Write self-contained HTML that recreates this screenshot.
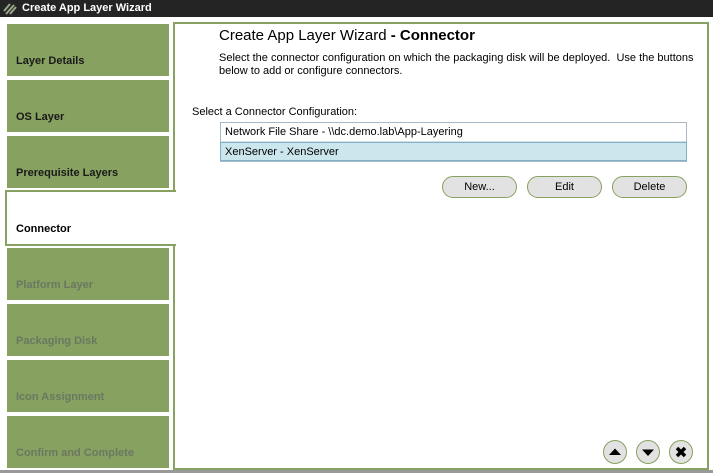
<!DOCTYPE html>
<html><head><style>
*{margin:0;padding:0;box-sizing:border-box}
body{width:713px;height:473px;background:#fff;font-family:"Liberation Sans",Arial,sans-serif;position:relative;overflow:hidden}
.bar{position:absolute;left:0;top:0;width:713px;height:17px;background:#242424;color:#fff;font-size:11px;font-weight:bold;line-height:17px}
.bar span{position:absolute;left:22px;top:0}
.tab{position:absolute;left:7px;width:162px;height:52px;background:#87a160;font-size:11px;font-weight:bold;color:#1a1a1a;padding:31px 0 0 9px}
.tab.dis{color:#6b7760}
.conn{position:absolute;left:5px;top:190px;width:171px;height:56px;background:#fff;border:2px solid #87a160;border-right:none;font-size:11px;font-weight:bold;padding:31px 0 0 9px;z-index:2}
.panel{position:absolute;left:173px;top:22px;width:536px;height:448px;border:2px solid #87a160}
.gray{position:absolute;left:0;top:470px;width:713px;height:3px;background:#999}
.t{position:absolute;left:219px;top:27px;font-size:15px}
.d{position:absolute;left:219px;top:52px;font-size:11px;line-height:13px;width:480px}
.l{position:absolute;left:192px;top:106px;font-size:11px}
.list{position:absolute;left:220px;top:122px;width:467px;height:40px;border:1px solid #a8b8c4;font-size:11px}
.r1{height:19px;line-height:18px;padding-left:4px;border-bottom:1px solid #d8e0e4}
.r2{height:19px;line-height:19px;padding-left:4px;background:#cce6ee;border:1px solid #7fb2c8;margin:0 -1px}
.btn{position:absolute;top:176px;width:75px;height:22px;border:1px solid #87a160;border-radius:11px;background:#e2e2e2;font-size:11px;text-align:center;line-height:20px}
.c{position:absolute;top:440px;width:24px;height:24px;border:1px solid #87a160;border-radius:50%;background:#e2e2e2}
</style></head><body>
<div class="bar"><svg width="14" height="14" style="position:absolute;left:3px;top:2px" viewBox="0 0 14 14"><path d="M1 9L7 2M3 12L11 3M7 12L13 5" stroke="#9aa88a" stroke-width="2"/></svg><span>Create App Layer Wizard</span></div>
<div class="panel"></div>
<div class="tab" style="top:24px">Layer Details</div>
<div class="tab" style="top:80px">OS Layer</div>
<div class="tab" style="top:136px">Prerequisite Layers</div>
<div class="conn">Connector</div>
<div class="tab dis" style="top:248px">Platform Layer</div>
<div class="tab dis" style="top:304px">Packaging Disk</div>
<div class="tab dis" style="top:360px">Icon Assignment</div>
<div class="tab dis" style="top:416px">Confirm and Complete</div>
<div class="t">Create App Layer Wizard <b>- Connector</b></div>
<div class="d">Select the connector configuration on which the packaging disk will be deployed.&nbsp; Use the buttons below to add or configure connectors.</div>
<div class="l">Select a Connector Configuration:</div>
<div class="list"><div class="r1">Network File Share - \\dc.demo.lab\App-Layering</div><div class="r2">XenServer - XenServer</div></div>
<div class="btn" style="left:442px">New...</div>
<div class="btn" style="left:527px">Edit</div>
<div class="btn" style="left:612px">Delete</div>
<div class="c" style="left:603px"><svg width="22" height="22"><path d="M5 14L11 7.5L17 14Z" fill="#000"/></svg></div>
<div class="c" style="left:636px"><svg width="22" height="22"><path d="M5 8.5L11 15L17 8.5Z" fill="#000"/></svg></div>
<div class="c" style="left:669px"><svg width="22" height="22"><path d="M7 7L15 15M15 7L7 15" stroke="#000" stroke-width="3.5"/></svg></div>
<div class="gray"></div>
</body></html>
